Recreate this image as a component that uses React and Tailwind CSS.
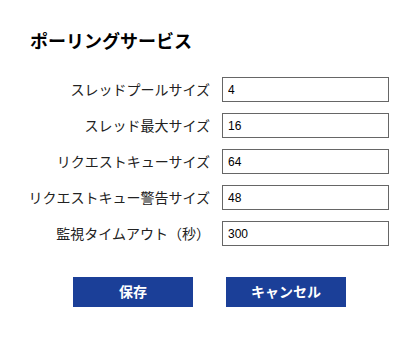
const FIELDS = [
  { label: 'スレッドプールサイズ', value: '4' },
  { label: 'スレッド最大サイズ', value: '16' },
  { label: 'リクエストキューサイズ', value: '64' },
  { label: 'リクエストキュー警告サイズ', value: '48' },
  { label: '監視タイムアウト（秒）', value: '300' },
]

const FONT = "font-['Liberation_Sans','Noto_Sans_CJK_JP',sans-serif]"

export default function App() {
  return (
    <div className={`min-h-[337px] w-[420px] bg-white pl-[30px] pt-[29px] text-[#222] ${FONT}`}>
      <h1 className="text-[18px] font-bold leading-[26px] text-black">ポーリングサービス</h1>

      <div className="mt-[22px] flex flex-col gap-[11px]">
        {FIELDS.map((f) => (
          <div key={f.label} className="flex items-center gap-[12px]">
            <div className="flex w-[180px] shrink-0 justify-end">
              <label className="shrink-0 whitespace-nowrap text-[14px] leading-[20px]">{f.label}</label>
            </div>
            <input
              type="text"
              defaultValue={f.value}
              className="h-[25px] w-[167px] border border-[#666] px-[5px] text-[12px] text-black outline-none"
            />
          </div>
        ))}
      </div>

      <div className="ml-[43px] mt-[31px] flex gap-[33px]">
        <button type="button" className="h-[30px] w-[120px] bg-[#1b3f98] text-[14px] font-bold text-white">
          保存
        </button>
        <button type="button" className="h-[30px] w-[120px] bg-[#1b3f98] text-[14px] font-bold text-white">
          キャンセル
        </button>
      </div>
    </div>
  )
}
